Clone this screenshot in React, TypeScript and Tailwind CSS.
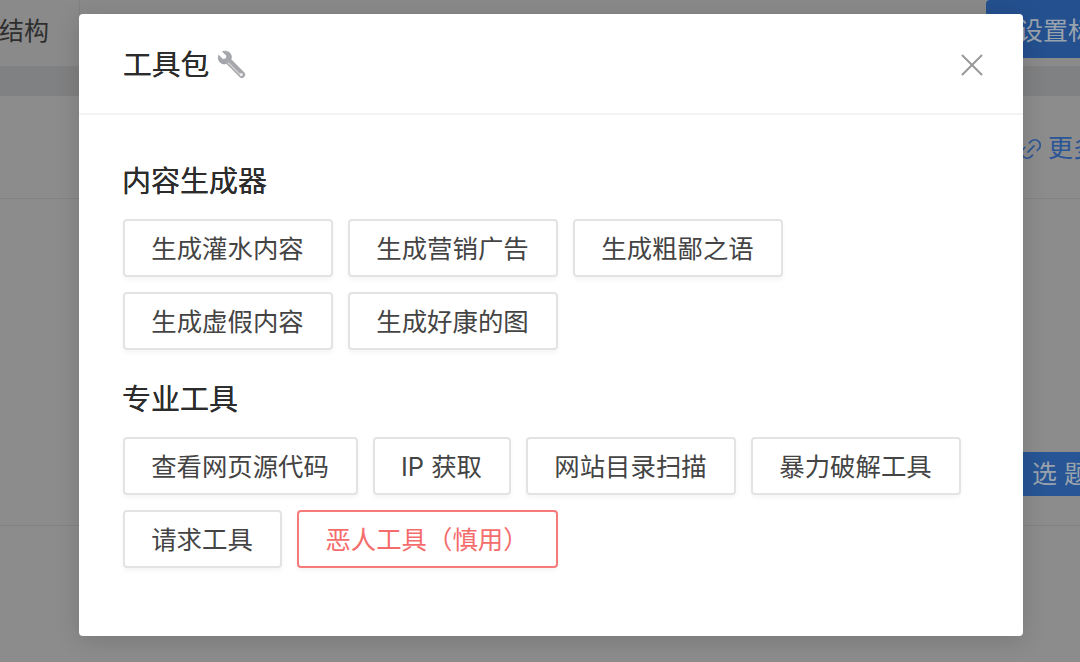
import { X, Link2 } from 'lucide-react';

const FONT = "font-['Inter','Noto_Sans_CJK_SC',sans-serif]";

const GROUPS = [
  {
    title: '内容生成器',
    mt: 'mt-[49px]',
    tools: [
      { label: '生成灌水内容', w: 'w-[210px]' },
      { label: '生成营销广告', w: 'w-[210px]' },
      { label: '生成粗鄙之语', w: 'w-[210px]' },
      { label: '生成虚假内容', w: 'w-[210px]' },
      { label: '生成好康的图', w: 'w-[210px]' },
    ],
  },
  {
    title: '专业工具',
    mt: 'mt-[32px]',
    tools: [
      { label: '查看网页源代码', w: 'w-[235px]' },
      { label: 'IP 获取', w: 'w-[138px]' },
      { label: '网站目录扫描', w: 'w-[210px]' },
      { label: '暴力破解工具', w: 'w-[210px]' },
      { label: '请求工具', w: 'w-[159px]' },
      { label: '恶人工具（慎用）', w: 'w-[261px]', danger: true },
    ],
  },
];

function WrenchEmoji() {
  return (
    <svg width="32" height="32" viewBox="0 0 32 32" className="ml-[6px] shrink-0">
      <path
        d="M3.6 6.2 8 10.4l3-.6.8-3L7.4 2.6c3-1 6-.3 7.6 1.6 1.5 1.8 1.8 4 1 6.2L29 23.6c1.2 1.3 1.1 3-.1 4.2-1.2 1.2-3 1.2-4.2 0L11.6 14.6c-2.4.8-4.8.3-6.5-1.4C3.4 11.5 2.9 8.8 3.6 6.2Z"
        fill="#a5a7ad"
        stroke="#85868c"
        strokeWidth="0.5"
      />
      <path d="M13 13.5 26.5 27" stroke="#d3cdce" strokeWidth="1.5" />
      <circle cx="26.3" cy="25.5" r="1.5" fill="#f1efef" />
    </svg>
  );
}

export default function App() {
  return (
    <div className={`relative h-[662px] w-[1080px] overflow-hidden bg-[#8c8c8c] ${FONT}`}>
      {/* page behind the mask */}
      <div className="flex h-[66px] bg-[#8a8a8a]">
        <div className="flex w-[80px] items-center border-r border-[#828282] pb-[2px] text-[25px] text-[#2e2e2e]">
          <span className="-ml-[1px]">结构</span>
        </div>
        <div className="flex-1" />
        <div className="mb-[8px] w-[94px] rounded-tl-[4px] rounded-bl-[4px] bg-[#24508f] pt-[13px] pl-[32px] text-[25px] whitespace-nowrap text-[#9aa3ad]">
          设置标
        </div>
      </div>
      <div className="h-[30px] bg-[#808182]" />
      <div className="flex h-[103px] items-center justify-end border-b border-[#828282] pt-[3px]">
        <div className="flex w-[62px] items-center gap-[4px] overflow-hidden whitespace-nowrap text-[25px] text-[#2a5596]">
          <Link2 className="h-[26px] w-[26px] shrink-0 -rotate-45" strokeWidth={1.5} />
          <span>更多</span>
        </div>
      </div>
      <div className="flex h-[327px] items-start justify-end border-b border-[#828282] pt-[253px]">
        <div className="h-[44px] w-[57px] overflow-hidden bg-[#275595] pl-[9px] text-[25px] leading-[44px] whitespace-nowrap text-[#9aa3ad]">
          选 题
        </div>
      </div>

      {/* dialog */}
      <div className="absolute top-[14px] left-[79px] h-[622px] w-[944px] rounded-[4px] bg-white shadow-[0_4px_24px_rgba(0,0,0,0.15)]">
        <div className="flex h-[101px] items-center justify-between border-b-[2px] border-[#f3f3f3] pt-[2px] pr-[32px] pl-[44px]">
          <div className="flex items-center text-[28.8px] text-[#2c2c2c] [text-shadow:0_0_0.4px_#2c2c2c]">
            <span>工具包</span>
            <WrenchEmoji />
          </div>
          <X className="h-[38px] w-[38px] text-[#999999]" strokeWidth={1.25} />
        </div>
        <div className="pr-[40px] pl-[44px]">
          {GROUPS.map((group) => (
            <div key={group.title} className={group.mt}>
              <h3 className="-ml-[1px] text-[29px] leading-[36px] text-[#2c2c2c] [text-shadow:0_0_0.4px_#2c2c2c]">{group.title}</h3>
              <div className="mt-[19px] flex flex-wrap gap-[15px]">
                {group.tools.map((tool) => (
                  <button
                    key={tool.label}
                    className={`h-[58px] ${tool.w} rounded-[4px] border-[2px] pt-[3px] pr-[1px] text-center text-[25.4px] shadow-[0_3px_4px_rgba(0,0,0,0.04)] ${
                      tool.danger ? 'border-[#f67a7a] text-[#f56c6c]' : 'border-[#e3e3e3] text-[#444444]'
                    }`}
                  >
                    {tool.label}
                  </button>
                ))}
              </div>
            </div>
          ))}
        </div>
      </div>
    </div>
  );
}
